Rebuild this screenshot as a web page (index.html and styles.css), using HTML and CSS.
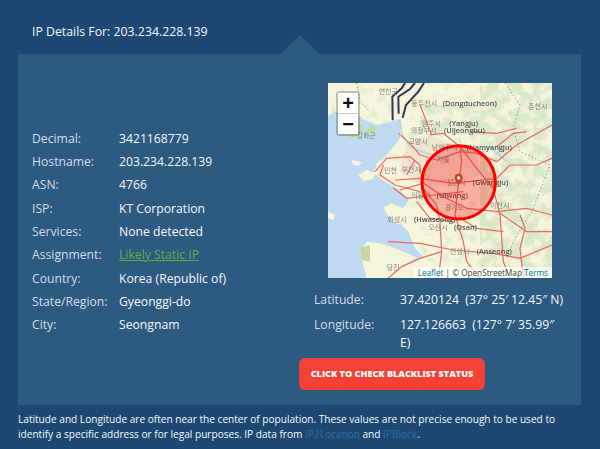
FILE: index.html
```html
<!DOCTYPE html>
<html lang="en">
<head>
<meta charset="utf-8">
<title>IP Details</title>
<link rel="stylesheet" href="styles.css">
</head>
<body>
<h1 class="title">IP Details For: 203.234.228.139</h1>
<main class="panel">
  <dl class="facts">
    <dt>Decimal:</dt><dd>3421168779</dd>
    <dt>Hostname:</dt><dd>203.234.228.139</dd>
    <dt>ASN:</dt><dd>4766</dd>
    <dt>ISP:</dt><dd>KT Corporation</dd>
    <dt>Services:</dt><dd>None detected</dd>
    <dt>Assignment:</dt><dd><a class="green" href="#">Likely Static IP</a></dd>
    <dt>Country:</dt><dd>Korea (Republic of)</dd>
    <dt>State/Region:</dt><dd>Gyeonggi-do</dd>
    <dt>City:</dt><dd>Seongnam</dd>
  </dl>
  <section class="geo">
    <div class="map">
      <svg class="tiles" viewBox="24 24 672 585" width="224" height="195" aria-hidden="true">
        <defs>
          <filter id="mottle" x="0" y="0" width="100%" height="100%">
            <feTurbulence type="fractalNoise" baseFrequency="0.028" numOctaves="3" seed="7"/>
            <feColorMatrix type="matrix" values="0 0 0 0 0.70  0 0 0 0 0.81  0 0 0 0 0.58  5 0 0 0 -1.9"/>
          </filter>
          <filter id="mottle-sparse" x="0" y="0" width="100%" height="100%">
            <feTurbulence type="fractalNoise" baseFrequency="0.03" numOctaves="3" seed="21"/>
            <feColorMatrix type="matrix" values="0 0 0 0 0.76  0 0 0 0 0.85  0 0 0 0 0.64  6 0 0 0 -3.2"/>
          </filter>
        </defs>
        <rect class="land" x="24" y="24" width="672" height="585"/>
        <rect filter="url(#mottle-sparse)" x="24" y="24" width="672" height="585"/>
        <rect filter="url(#mottle)" x="480" y="24" width="216" height="585"/>
        <rect filter="url(#mottle)" x="300" y="90" width="180" height="90"/>
        <path class="sea" d="M24 125 L40 112 L90 108 L130 132 L170 150 L215 140 L240 132 L240 190 L205 235 L170 265 L160 295 L195 320 L240 345 L265 375 L250 400 L215 385 L195 395 L225 430 L265 470 L285 520 L310 545 L270 560 L230 585 L190 609 L24 609 Z"/>
        <path class="land" d="M120 530 L140 500 L180 505 L225 520 L262 535 L290 548 L240 575 L205 609 L140 609 Z"/>
        <path class="land" d="M115 300 L140 285 L165 295 L160 312 L130 318 Z"/>
        <path class="land" d="M190 395 L230 395 L250 430 L235 450 L205 425 Z"/>
        <path class="land" d="M95 255 L125 262 L118 272 L98 268 Z M24 410 L45 420 L40 435 L24 430 Z"/>
        <path class="green" d="M62 150 L95 128 L125 148 L130 172 L100 190 L70 180 Z"/>
        <path class="green" d="M150 150 L170 158 L160 180 L140 170 Z M120 520 L150 510 L150 560 L125 555 Z"/>
        <path class="urban" d="M260 200 L330 180 L420 215 L470 240 L480 300 L400 330 L300 330 L240 290 Z"/>
        <path class="river" d="M240 135 L245 175 L270 215 L320 235 L370 250 L430 225 L480 235 L510 215 L560 260"/>
        <path class="dmz" d="M218 136 L217 65 L245 40 L255 24 M236 116 L235 65 L270 42 L285 24 M248 128 L258 90 L295 50 L312 24"/>
        <g class="roads">
          <path d="M235 175 L270 205 L300 240 L350 255 L420 230 L470 235 L530 260 L590 210 L696 150"/>
          <path d="M165 290 L200 250 L270 245 L300 270 L305 320 L370 365 L440 400 L530 410 L620 400 L696 420"/>
          <path d="M225 315 L300 310 L400 325 L530 310 L570 270 L650 270 L696 250"/>
          <path d="M420 215 L425 260 L415 330 L405 420 L430 500 L440 560 L480 609"/>
          <path d="M330 180 L370 175 L420 215 L470 280 L520 340 L540 420 L550 560 L570 609"/>
          <path d="M310 340 L350 390 L360 440 L365 530 L355 609"/>
          <path d="M205 500 L300 505 L400 525 L520 535 L600 550 L696 510"/>
          <path d="M220 340 L260 370 L345 360 L430 350 M190 270 L180 300 L225 330 L300 350"/>
          <path d="M600 420 L615 460 L600 520 L610 609 M620 170 L580 175 L530 215 M540 415 L620 470 L696 470"/>
          <path d="M205 609 L245 575 L300 550 L365 530 M300 90 L335 180 M420 430 L470 460 L550 470 M450 170 L530 175 L590 160"/>
          <path d="M260 300 L285 255 M240 345 L310 325 M290 380 L330 430 L400 440"/>
        </g>
        <path class="border" d="M110 24 L120 80 L150 110 M555 24 L600 90 L580 160 L600 230 L690 270 L640 400 L580 500 L560 550 M250 240 L340 320 L420 310"/>
        <g class="labels">
          <text x="368" y="92">(Dongducheon)</text>
          <text x="388" y="152">(Yangju)</text>
          <text x="372" y="174">(Uijeongbu)</text>
          <text x="440" y="226">(Namyangju)</text>
          <text x="458" y="329">(Gwangju)</text>
          <text x="350" y="369">(Uiwang)</text>
          <text x="282" y="442">(Hwaseong)</text>
          <text x="402" y="466">(Osan)</text>
          <text x="470" y="536">(Anseong)</text>
        </g>
        <g class="hangul">
          <text x="274" y="92">동두천시</text>
          <text x="305" y="152">양주시</text>
          <text x="272" y="174">의정부시</text>
          <text x="265" y="206">고양시</text>
          <text x="335" y="226">남양주시</text>
          <text x="350" y="260">서울</text>
          <text x="192" y="294">인천</text>
          <text x="245" y="290">부천시</text>
          <text x="380" y="329">성남시</text>
          <text x="274" y="369">의왕시</text>
          <text x="374" y="406">경기도</text>
          <text x="510" y="400">이천시</text>
          <text x="202" y="442">화성시</text>
          <text x="325" y="466">오산시</text>
          <text x="390" y="536">안성시</text>
          <text x="200" y="584">당진</text>
          <text x="110" y="188">강화군</text>
          <text x="624" y="102">춘천시</text>
          <text x="176" y="56">연천군</text>
        </g>
        <circle class="radius" cx="416" cy="322" r="110"/>
        <path class="pin" d="M416 330 C410 320 404 314 404 308 A12 12 0 0 1 428 308 C428 314 422 320 416 330 Z"/>
        <circle class="pin-dot" cx="416" cy="309" r="5"/>
      </svg>
      <div class="zoom">
        <span class="zoom-btn">+</span>
        <span class="zoom-btn zoom-minus">−</span>
      </div>
      <div class="attrib"><a href="#">Leaflet</a> | © OpenStreetMap <a href="#">Terms</a></div>
    </div>
    <dl class="coords">
      <dt>Latitude:</dt><dd>37.420124&nbsp; (37° 25′ 12.45″ N)</dd>
      <dt>Longitude:</dt><dd>127.126663&nbsp; (127° 7′ 35.99″ E)</dd>
    </dl>
    <a class="btn" href="#">CLICK TO CHECK BLACKLIST STATUS</a>
  </section>
</main>
<p class="note">Latitude and Longitude are often near the center of population. These values are not precise enough to be used to identify a specific address or for legal purposes. IP data from <a class="blue" href="#">IP2Location</a> and <a class="blue" href="#">IPBlock</a>.</p>
</body>
</html>
```
FILE: styles.css
```css
* { box-sizing: border-box; }
html, body { margin: 0; height: 449px; overflow: hidden; }
body {
  background: #1e4872;
  color: #f5f7fa;
  font-family: "Open Sans", "Noto Sans", sans-serif;
  font-size: 12.2px;
}
.title {
  margin: 0;
  height: 54px;
  padding: 22px 0 0 32px;
  font-size: 12.3px;
  line-height: 20px;
  font-weight: 400;
}
.panel {
  position: relative;
  display: flex;
  align-items: flex-start;
  margin: 0 19px 0 18px;
  height: 351px;
  background: #2d5a80;
}
.panel::before {
  content: "";
  position: absolute;
  left: 263px;
  top: -19px;
  border-left: 19px solid transparent;
  border-right: 19px solid transparent;
  border-bottom: 19px solid #2d5a80;
}
.facts {
  display: grid;
  grid-template-columns: 87px 1fr;
  grid-auto-rows: 23.3px;
  align-items: center;
  width: 281px;
  margin: 72.6px 0 0;
  padding-left: 14px;
}
dt { color: #d3dde6; }
dd { margin: 0; }
.green { color: #62ad43; text-decoration: underline; }
.blue { color: #2a6aa5; text-decoration: none; }
.geo { width: 282px; padding-top: 29px; display: flex; flex-direction: column; }
.map {
  position: relative;
  width: 224px;
  height: 195px;
  margin-left: 29px;
  overflow: hidden;
}
.tiles { display: block; filter: blur(0.35px); }
.tiles .land { fill: #f7f4dc; }
.sea { fill: #c0daf1; }
.tiles .green { fill: #c3d8a4; }
.urban { fill: #efe4cf; }
.river { fill: none; stroke: #b4d3ec; stroke-width: 5; }
.dmz { fill: none; stroke: #3a3258; stroke-width: 6; }
.roads { fill: none; stroke: #e96a62; stroke-width: 3.6; stroke-linejoin: round; }
.border { fill: none; stroke: #7f8a86; stroke-width: 2.6; stroke-dasharray: 4 7; }
.labels text { font: 600 22px "Open Sans", sans-serif; fill: #505050; }
.hangul text { font: 400 21px "Noto Sans CJK KR", sans-serif; fill: #85857a; }
.radius { fill: #f00; fill-opacity: 0.28; stroke: #f00; stroke-width: 9; }
.pin { fill: #c8401a; }
.pin-dot { fill: #fff; }
.zoom {
  position: absolute;
  left: 8px;
  top: 8px;
  display: flex;
  flex-direction: column;
  border: 2px solid rgba(0, 0, 0, 0.22);
  border-radius: 4px;
  background-clip: padding-box;
}
.zoom-btn {
  width: 20px;
  height: 20px;
  background: #fff;
  color: #111;
  font: 700 20px/20px "Liberation Sans", sans-serif;
  text-align: center;
}
.zoom-minus { border-top: 1px solid #ccc; height: 21px; }
.attrib {
  position: absolute;
  right: 0;
  bottom: 0;
  padding: 0 4px;
  background: rgba(255, 255, 255, 0.7);
  color: #444;
  font-size: 8.2px;
  line-height: 11px;
  white-space: nowrap;
}
.attrib a { color: #0078a8; text-decoration: none; }
.coords {
  display: grid;
  grid-template-columns: 86px 166px;
  row-gap: 7px;
  margin: 13px 0 0 15px;
  line-height: 18px;
}
.btn {
  align-self: flex-start;
  width: 186px;
  height: 32px;
  margin-top: 6px;
  border-radius: 6px;
  background: #f44336;
  color: #fff;
  font-size: 9.1px;
  font-weight: 800;
  line-height: 32px;
  text-align: center;
  text-decoration: none;
}
.note {
  margin: 0;
  padding: 7px 18px 0;
  font-size: 10.1px;
  line-height: 15px;
}
```
